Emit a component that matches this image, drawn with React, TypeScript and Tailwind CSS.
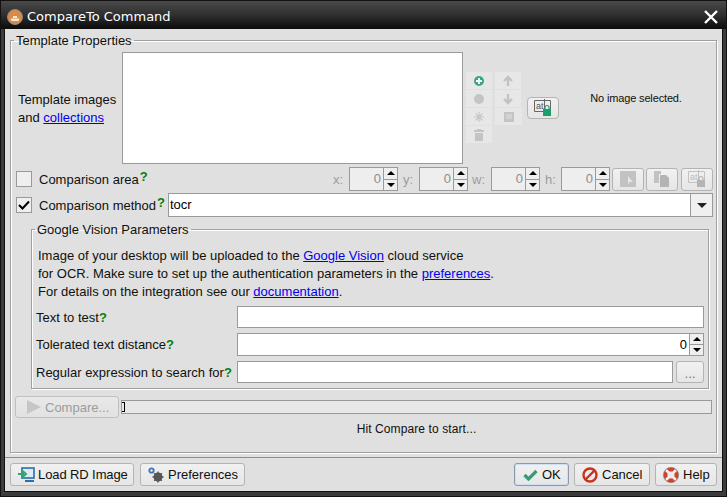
import type { ReactNode } from 'react';

const FONT = "font-['Liberation_Sans',Arial,sans-serif]";

function Help() {
  return <sup className="ml-px text-[13px] font-bold leading-none text-[#0a7d0a] relative top-[-3px] align-baseline">?</sup>;
}

function Link({ children }: { children: ReactNode }) {
  return <span className="text-[#0000ee] underline">{children}</span>;
}

function Group({ title, className, legendClass, children }: { title: string; className: string; legendClass: string; children: ReactNode }) {
  return (
    <fieldset className={`border border-[#a0a0a0] shadow-[inset_1px_1px_0_#fff,1px_1px_0_#fff] ${className}`}>
      <legend className={`px-[2px] text-[13px] leading-[15px] text-[#10100c] ${legendClass}`}>{title}</legend>
      {children}
    </fieldset>
  );
}

function ToolIcon({ wide = false, children }: { wide?: boolean; children: ReactNode }) {
  return (
    <div className={`h-[17px] flex items-center justify-center bg-[#e7e7e7] ${wide ? 'w-[27px]' : 'w-[26px]'}`}>
      {children}
    </div>
  );
}

function Spinner() {
  return (
    <div className="flex flex-col shrink-0 w-[14px] border-l border-[#9a9a9a] bg-[#efefef]">
      <div className="flex-1 flex items-center justify-center border-b border-[#9a9a9a]">
        <div className="w-0 h-0 border-x-[4px] border-x-transparent border-b-[4px] border-b-black" />
      </div>
      <div className="flex-1 flex items-center justify-center">
        <div className="w-0 h-0 border-x-[4px] border-x-transparent border-t-[4px] border-t-black" />
      </div>
    </div>
  );
}

function Coord({ label, labelClass }: { label: string; labelClass: string }) {
  return (
    <>
      <span className={`pt-[1px] text-[13px] text-[#9c9c9c] ${labelClass}`}>{label}</span>
      <div className="flex h-[24px] w-[49px] border border-[#9a9a9a] bg-[#eeeeee]">
        <div className="flex-1 pr-[2px] text-right text-[13px] leading-[22px] text-[#8c8c8c]">0</div>
        <Spinner />
      </div>
    </>
  );
}

function Btn({ className, children, focus = false }: { className: string; children: ReactNode; focus?: boolean }) {
  return (
    <div
      className={`flex items-center rounded-[3px] border bg-gradient-to-b from-[#f1f1f1] to-[#e6e6e6] text-[13px] text-[#10100c] ${
        focus ? 'border-[#8a9aae] shadow-[inset_0_0_0_1px_#cfe0f5]' : 'border-[#b4b4b4]'
      } ${className}`}
    >
      {children}
    </div>
  );
}

function ParamRow({ label, children, className }: { label: string; children: ReactNode; className: string }) {
  return (
    <div className={`flex items-center ${className}`}>
      <div className="w-[202px] pl-[1px] pt-[1px] text-[13px] whitespace-nowrap text-[#10100c]">
        {label}
        <span className="font-bold text-[#0a7d0a]">?</span>
      </div>
      {children}
    </div>
  );
}

function LockIcon({ frame, text, lock }: { frame: string; text: string; lock: string }) {
  return (
    <svg width="20" height="18" viewBox="0 0 20 18">
      <path d="M1.5 1.5h16v11h-16z" fill="none" stroke={frame} />
      <path d="M11.5 0v12" stroke={frame} />
      <text x="3" y="10" fontSize="9" fill={text} fontFamily="Liberation Sans">at</text>
      <rect x="10" y="10" width="8" height="7" fill={lock} />
      <path d="M12 10V8.5a2 2 0 014 0V10" fill="none" stroke={lock} strokeWidth="1.2" />
    </svg>
  );
}

export default function App() {
  return (
    <div className={`${FONT} w-[727px] h-[497px] overflow-hidden flex flex-col bg-[#3c3c3c] border border-[#111]`}>
      {/* title bar */}
      <div className="h-[28px] shrink-0 flex items-start pt-[8px] pl-[6px] pr-[8px] bg-gradient-to-b from-[#4a4a4a] via-[#2f2f2f] to-[#0c0c0c]">
        <svg width="16" height="16" viewBox="0 0 16 16">
          <circle cx="8" cy="8" r="7.5" fill="#d98a45" stroke="#8b8b8b" />
          <path d="M3.5 9.5h9l-1 2.5h-7z M6 7h4v2H6z" fill="#f8e6d0" />
        </svg>
        <span className="ml-[4px] text-[13px] leading-[16px] font-['DejaVu_Sans',sans-serif] text-white">CompareTo Command</span>
        <svg className="ml-auto mt-[1px]" width="14" height="14" viewBox="0 0 14 14">
          <path d="M1 1l12 12M13 1L1 13" stroke="#fff" strokeWidth="2.4" />
        </svg>
      </div>

      {/* dialog body */}
      <div className="flex-1 mx-[3px] mb-[4px] flex flex-col bg-[#e0e0e0] border-x border-b border-[#111]">
        <div className="h-[429px] shrink-0 px-[5px] pt-[4px] border-b border-[#8d8d8d]">
          <Group title="Template Properties" className="h-[420px] pl-[4px] pr-[3px]" legendClass="-ml-[1px]">
            {/* template images */}
            <div className="flex h-[112px] mt-[4px]">
              <div className="w-[107px] pl-[3px] pt-[39px] text-[13px] leading-[18px] text-[#10100c]">
                Template images
                <br />
                and <Link>collections</Link>
              </div>
              <div className="w-[341px] border border-[#9a9a9a] bg-white" />
              <div className="ml-[3px] mt-[20px] grid grid-cols-[26px_26px] gap-x-[3px] gap-y-[1px] h-[72px] content-start">
                <ToolIcon>
                  <svg width="12" height="12" viewBox="0 0 12 12"><circle cx="6" cy="6" r="5" fill="#3da87a" /><path d="M3 6h6M6 3v6" stroke="#fff" strokeWidth="1.8" /></svg>
                </ToolIcon>
                <ToolIcon>
                  <svg width="12" height="12" viewBox="0 0 12 12"><path d="M6 11V3M2 6l4-4 4 4" fill="none" stroke="#c2c2c2" strokeWidth="2.4" /></svg>
                </ToolIcon>
                <ToolIcon>
                  <svg width="12" height="12" viewBox="0 0 12 12"><circle cx="6" cy="6" r="5" fill="#c4c4c4" /></svg>
                </ToolIcon>
                <ToolIcon>
                  <svg width="12" height="12" viewBox="0 0 12 12"><path d="M6 1v8M2 6l4 4 4-4" fill="none" stroke="#c2c2c2" strokeWidth="2.4" /></svg>
                </ToolIcon>
                <ToolIcon>
                  <svg width="12" height="12" viewBox="0 0 12 12"><path d="M6 1v10M1 6h10M2.5 2.5l7 7M9.5 2.5l-7 7" stroke="#c8c8c8" strokeWidth="1.2" /><circle cx="6" cy="6" r="2" fill="#c8c8c8" /></svg>
                </ToolIcon>
                <ToolIcon wide>
                  <svg width="10" height="10" viewBox="0 0 10 10"><rect width="10" height="10" fill="#c4c4c4" /><rect x="2" y="2" width="6" height="5" fill="#d2d2d2" /></svg>
                </ToolIcon>
                <ToolIcon>
                  <svg width="10" height="12" viewBox="0 0 10 12"><path d="M3 0h4v1h3v2H0V1h3zM1 4h8v8H1z" fill="#c4c4c4" /></svg>
                </ToolIcon>
              </div>
              <Btn className="ml-[6px] mt-[45px] h-[22px] w-[32px] justify-center !rounded-[4px]">
                <LockIcon frame="#666" text="#555" lock="#1aa06a" />
              </Btn>
              <div className="flex-1 pt-[39px] text-center text-[11px] tracking-[-0.15px] leading-[14px] text-[#10100c]">No image selected.</div>
            </div>

            {/* comparison area */}
            <div className="flex items-center h-[24px] mt-[3px] ml-[1px]">
              <div className="w-[16px] h-[16px] border border-[#9a9a9a] bg-[#efefef]" />
              <span className="ml-[7px] pt-[1px] text-[13px] whitespace-nowrap text-[#10100c]">
                Comparison area<Help />
              </span>
              <span className="flex-1" />
              <Coord label="x:" labelClass="w-[16px]" />
              <Coord label="y:" labelClass="w-[21px] pl-[5px]" />
              <Coord label="w:" labelClass="w-[23px] pl-[4px]" />
              <Coord label="h:" labelClass="w-[21px] pl-[5px]" />
              <Btn className="w-[32px] h-[23px] justify-center ml-[2px]">
                <svg width="16" height="16" viewBox="0 0 16 16"><rect width="16" height="16" fill="#c2c2c2" /><path d="M8 5l5 6H9.5L8 14z" fill="#e4e4e4" /></svg>
              </Btn>
              <Btn className="w-[32px] h-[23px] justify-center ml-[2px]">
                <svg width="18" height="16" viewBox="0 0 18 16"><path d="M1 0h7v3H6v9H1z" fill="#c2c2c2" /><path d="M7 4h6l3 3v9H7z" fill="#b4b4b4" /></svg>
              </Btn>
              <Btn className="w-[32px] h-[23px] justify-center ml-[3px]">
                <LockIcon frame="#c2c2c2" text="#bdbdbd" lock="#b4b4b4" />
              </Btn>
            </div>

            {/* comparison method */}
            <div className="flex items-center h-[24px] mt-[2px] ml-[1px]">
              <div className="w-[16px] h-[16px] flex items-center justify-center border border-[#9a9a9a] bg-[#efefef]">
                <svg width="12" height="10" viewBox="0 0 12 10"><path d="M1 5l3.5 3.5L11 1.5" fill="none" stroke="#000" strokeWidth="2" /></svg>
              </div>
              <span className="ml-[7px] pt-[1px] w-[129px] text-[13px] whitespace-nowrap text-[#10100c]">
                Comparison method<Help />
              </span>
              <div className="flex w-[545px] h-[24px] border border-[#9a9a9a] bg-white">
                <div className="flex-1 pl-[1px] text-[13px] leading-[22px] text-black">tocr</div>
                <div className="w-[22px] flex items-center justify-center border-l border-[#9a9a9a] bg-[#f0f0f0]">
                  <div className="w-0 h-0 border-x-[5px] border-x-transparent border-t-[5px] border-t-[#222]" />
                </div>
              </div>
            </div>

            {/* google vision */}
            <Group title="Google Vision Parameters" className="mt-[5px] ml-[16px] mr-[4px] h-[167px] px-[3px]" legendClass="ml-0">
              <div className="pl-[3px] pt-[10px] text-[13px] leading-[18px] text-[#10100c]">
                <div>Image of your desktop will be uploaded to the <Link>Google Vision</Link> cloud service</div>
                <div>for OCR. Make sure to set up the authentication parameters in the <Link>preferences</Link>.</div>
                <div>For details on the integration see our <Link>documentation</Link>.</div>
              </div>
              <ParamRow label="Text to test" className="mt-[5px] h-[22px]">
                <div className="w-[467px] h-[22px] border border-[#9a9a9a] bg-white" />
              </ParamRow>
              <ParamRow label="Tolerated text distance" className="mt-[5px] h-[23px]">
                <div className="flex w-[467px] h-[23px] border border-[#9a9a9a] bg-white">
                  <div className="flex-1 pr-[2px] text-right text-[13px] leading-[21px] text-black">0</div>
                  <Spinner />
                </div>
              </ParamRow>
              <ParamRow label="Regular expression to search for" className="mt-[5px] h-[22px]">
                <div className="w-[436px] h-[22px] border border-[#9a9a9a] bg-white" />
                <Btn className="ml-[3px] w-[28px] h-[22px] justify-center pt-[3px] !text-[#2a7fd0]">...</Btn>
              </ParamRow>
            </Group>

            {/* compare */}
            <div className="flex items-center h-[22px] mt-[7px]">
              <Btn className="w-[104px] h-[22px] pl-[10px] !from-[#e8e8e8] !to-[#e2e2e2] !border-[#c0c0c0]">
                <svg width="16" height="14" viewBox="0 0 16 14"><path d="M1 0l14 7-14 7z" fill="#c6c6c6" /></svg>
                <span className="ml-[3px] pt-[1px] text-[#9c9c9c]">Compare...</span>
              </Btn>
              <div className="ml-[2px] w-[591px] h-[14px] flex items-center border border-[#9a9a9a] bg-[#e8e8e8]">
                <div className="w-[3px] h-[10px] border-y border-r border-black" />
              </div>
            </div>
            <div className="mt-[4px] ml-[106px] w-[591px] text-center text-[12px] tracking-[0.1px] leading-[14px] text-[#10100c]">Hit Compare to start...</div>
          </Group>
        </div>

        {/* bottom buttons */}
        <div className="flex-1 flex items-center pl-[5px] pr-[5px]">
          <Btn className="w-[124px] h-[23px] pl-[7px] pt-[1px]">
            <svg width="17" height="16" viewBox="0 0 17 16">
              <rect x="4" y="1" width="12" height="10" fill="#dfeaf5" stroke="#2a6fa8" strokeWidth="1.6" />
              <path d="M7 14h9" stroke="#2a6fa8" strokeWidth="2" />
              <path d="M0 7h6M4 3.5L8 7l-4 3.5" fill="none" stroke="#2fa86a" strokeWidth="2" />
            </svg>
            <span className="ml-[3px] tracking-[-0.1px]">Load RD Image</span>
          </Btn>
          <Btn className="ml-[6px] w-[105px] h-[23px] pl-[7px] pt-[1px]">
            <svg width="16" height="16" viewBox="0 0 16 16">
              <circle cx="3.5" cy="3.5" r="2.2" fill="none" stroke="#3a74b5" strokeWidth="1.8" />
              <circle cx="10" cy="10" r="3.2" fill="none" stroke="#555" strokeWidth="2.6" />
              <path d="M10 4.5v11M4.5 10h11M6.2 6.2l7.6 7.6M13.8 6.2l-7.6 7.6" stroke="#555" strokeWidth="1.4" />
            </svg>
            <span className="ml-[4px]">Preferences</span>
          </Btn>
          <Btn focus className="ml-auto w-[55px] h-[23px] pl-[8px] pt-[1px]">
            <svg width="15" height="12" viewBox="0 0 15 12"><path d="M1.5 6l4 4L13.5 2" fill="none" stroke="#3a9a78" strokeWidth="3.2" /></svg>
            <span className="ml-[4px]">OK</span>
          </Btn>
          <Btn className="ml-[5px] w-[76px] h-[23px] pl-[7px] pt-[1px]">
            <svg width="16" height="16" viewBox="0 0 16 16"><circle cx="8" cy="8" r="6.5" fill="none" stroke="#c8321e" strokeWidth="2.4" /><path d="M3.5 12.5l9-9" stroke="#c8321e" strokeWidth="2.4" /></svg>
            <span className="ml-[4px]">Cancel</span>
          </Btn>
          <Btn className="ml-[5px] w-[62px] h-[23px] pl-[7px] pt-[1px]">
            <svg width="16" height="16" viewBox="0 0 16 16"><circle cx="8" cy="8" r="5.5" fill="none" stroke="#d8402a" strokeWidth="4" /><path d="M3 3l3 3M13 3l-3 3M3 13l3-3M13 13l-3-3" stroke="#f2f2f2" strokeWidth="2.6" /><circle cx="8" cy="8" r="7.6" fill="none" stroke="#777" strokeWidth="0.7" /></svg>
            <span className="ml-[4px]">Help</span>
          </Btn>
        </div>
      </div>
    </div>
  );
}
